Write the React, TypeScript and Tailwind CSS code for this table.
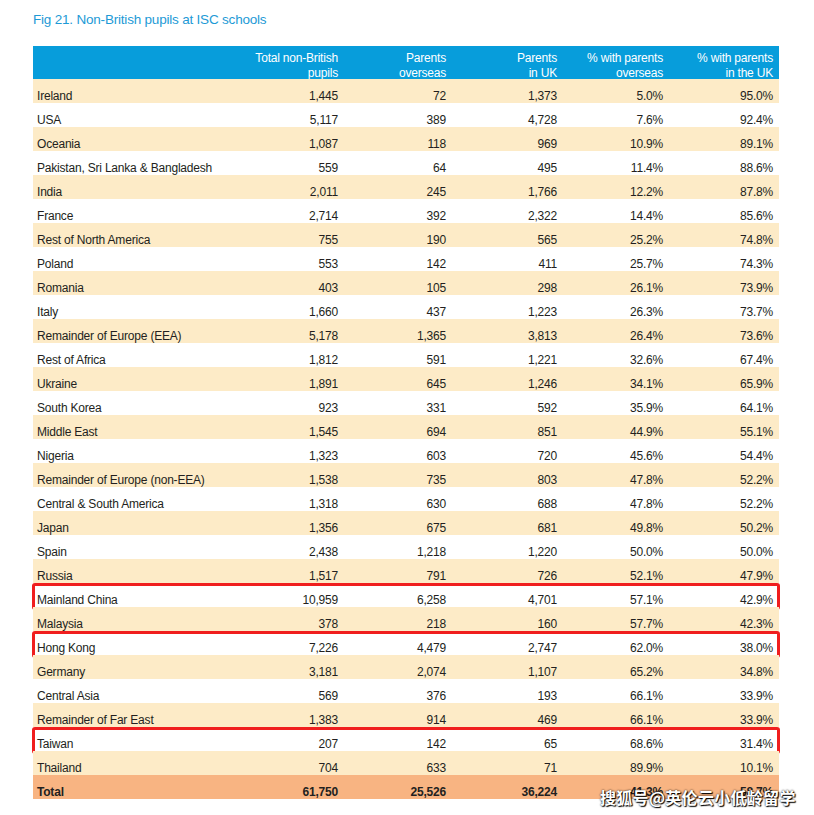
const rows: [string, string, string, string, string, string][] = [
  ['Ireland', '1,445', '72', '1,373', '5.0%', '95.0%'],
  ['USA', '5,117', '389', '4,728', '7.6%', '92.4%'],
  ['Oceania', '1,087', '118', '969', '10.9%', '89.1%'],
  ['Pakistan, Sri Lanka & Bangladesh', '559', '64', '495', '11.4%', '88.6%'],
  ['India', '2,011', '245', '1,766', '12.2%', '87.8%'],
  ['France', '2,714', '392', '2,322', '14.4%', '85.6%'],
  ['Rest of North America', '755', '190', '565', '25.2%', '74.8%'],
  ['Poland', '553', '142', '411', '25.7%', '74.3%'],
  ['Romania', '403', '105', '298', '26.1%', '73.9%'],
  ['Italy', '1,660', '437', '1,223', '26.3%', '73.7%'],
  ['Remainder of Europe (EEA)', '5,178', '1,365', '3,813', '26.4%', '73.6%'],
  ['Rest of Africa', '1,812', '591', '1,221', '32.6%', '67.4%'],
  ['Ukraine', '1,891', '645', '1,246', '34.1%', '65.9%'],
  ['South Korea', '923', '331', '592', '35.9%', '64.1%'],
  ['Middle East', '1,545', '694', '851', '44.9%', '55.1%'],
  ['Nigeria', '1,323', '603', '720', '45.6%', '54.4%'],
  ['Remainder of Europe (non-EEA)', '1,538', '735', '803', '47.8%', '52.2%'],
  ['Central & South America', '1,318', '630', '688', '47.8%', '52.2%'],
  ['Japan', '1,356', '675', '681', '49.8%', '50.2%'],
  ['Spain', '2,438', '1,218', '1,220', '50.0%', '50.0%'],
  ['Russia', '1,517', '791', '726', '52.1%', '47.9%'],
  ['Mainland China', '10,959', '6,258', '4,701', '57.1%', '42.9%'],
  ['Malaysia', '378', '218', '160', '57.7%', '42.3%'],
  ['Hong Kong', '7,226', '4,479', '2,747', '62.0%', '38.0%'],
  ['Germany', '3,181', '2,074', '1,107', '65.2%', '34.8%'],
  ['Central Asia', '569', '376', '193', '66.1%', '33.9%'],
  ['Remainder of Far East', '1,383', '914', '469', '66.1%', '33.9%'],
  ['Taiwan', '207', '142', '65', '68.6%', '31.4%'],
  ['Thailand', '704', '633', '71', '89.9%', '10.1%'],
];

const highlighted = ['Mainland China', 'Hong Kong', 'Taiwan'];

// column widths: name | total | overseas | in UK | % overseas | % UK, plus 6px right pad
const grid = 'grid grid-cols-[200px_105px_108px_111px_106px_110px] pr-1.5';

function Row({ r, i }: { r: string[]; i: number }) {
  const hl = highlighted.includes(r[0]);
  return (
    <div className={`relative ${grid} h-6 items-center pt-[10px] leading-[14px] ${i % 2 === 0 ? 'bg-[#fdebc7]' : 'bg-white'}`}>
      <div className="pl-1 whitespace-nowrap">{r[0]}</div>
      {r.slice(1).map((v, j) => (
        <div key={j} className="text-right">{v}</div>
      ))}
      {hl && (
        <div className="absolute -left-px -right-px top-0 -bottom-[3px] rounded-[3px] border-[3px] border-[#f01e1e]" />
      )}
    </div>
  );
}

export default function App() {
  return (
    <div className="w-[814px] h-[815px] bg-white relative overflow-hidden font-['Liberation_Sans',sans-serif] text-[12px] text-[#231f20]">
      <div className="pl-[33px] pt-[10px] text-[13.5px] text-[#1d9ad6] tracking-[-0.2px]">
        Fig 21. Non-British pupils at ISC schools
      </div>
      <div className="ml-[33px] mt-[16px] w-[746px] tracking-[-0.2px]">
        <div className={`${grid} h-[33px] pt-[5px] bg-[#079ddb] text-white leading-[15px] items-center`}>
          <div />
          <div className="text-right">Total non-British<br />pupils</div>
          <div className="text-right">Parents<br />overseas</div>
          <div className="text-right">Parents<br />in UK</div>
          <div className="text-right">% with parents<br />overseas</div>
          <div className="text-right">% with parents<br />in the UK</div>
        </div>
        {rows.map((r, i) => (
          <Row key={r[0]} r={r} i={i} />
        ))}
        <div className={`${grid} h-6 items-center pt-[10px] leading-[14px] bg-[#f8b482] font-bold`}>
          <div className="pl-1">Total</div>
          <div className="text-right">61,750</div>
          <div className="text-right">25,526</div>
          <div className="text-right">36,224</div>
          <div className="text-right">41.3%</div>
          <div className="text-right">58.7%</div>
        </div>
      </div>
      <div className="absolute left-[600px] top-[785px] text-[16px] leading-6 font-bold tracking-[0.3px] text-white font-['Noto_Sans_CJK_SC',sans-serif] [text-shadow:0_0_2px_#000,1px_1px_1px_#000]">
        搜狐号@英伦云小低龄留学
      </div>
    </div>
  );
}
